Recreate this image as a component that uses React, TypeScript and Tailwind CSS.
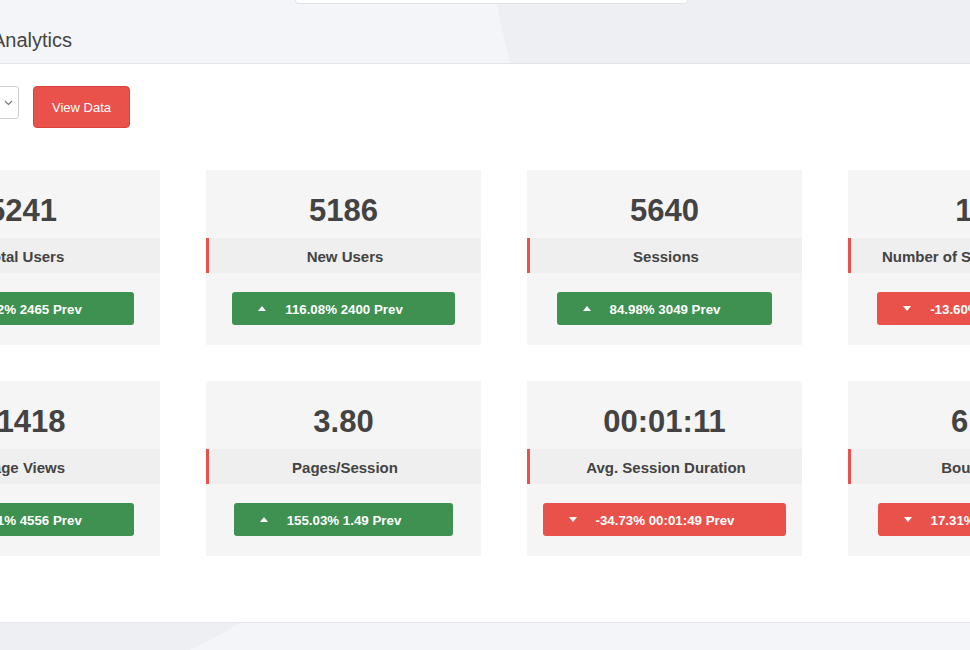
import React from 'react';

type Stat = {
  value: string;
  label: string;
  change: string;
  up: boolean;
};

const rows: Stat[][] = [
  [
    { value: '5241', label: 'Total Users', change: '112.62% 2465 Prev', up: true },
    { value: '5186', label: 'New Users', change: '116.08% 2400 Prev', up: true },
    { value: '5640', label: 'Sessions', change: '84.98% 3049 Prev', up: true },
    { value: '1.08', label: 'Number of Sessions per User', change: '-13.60% 1.25 Prev', up: false },
  ],
  [
    { value: '21418', label: 'Page Views', change: '370.11% 4556 Prev', up: true },
    { value: '3.80', label: 'Pages/Session', change: '155.03% 1.49 Prev', up: true },
    { value: '00:01:11', label: 'Avg. Session Duration', change: '-34.73% 00:01:49 Prev', up: false },
    { value: '6140', label: 'Bounce Rate', change: '17.31% 5234 Prev', up: false },
  ],
];

function Caret({ up }: { up: boolean }) {
  return (
    <svg width="8" height="5" viewBox="0 0 8 5" className="shrink-0">
      {up ? <polygon points="0,5 8,5 4,0" fill="#fff" /> : <polygon points="0,0 8,0 4,5" fill="#fff" />}
    </svg>
  );
}

function StatCard({ stat }: { stat: Stat }) {
  return (
    <div className="w-[275px] shrink-0 bg-[#f5f5f5] text-[#434343]">
      <div className="pt-[22px] pb-[9px] text-center text-[31px] leading-[37px] font-bold">{stat.value}</div>
      <div className="h-[35px] pt-[3px] flex items-center justify-center bg-[#efefef] border-l-[3px] border-[#e9524a] text-[15px] font-bold whitespace-nowrap">
        {stat.label}
      </div>
      <div className="pt-[19px] pb-[20px] flex justify-center">
        <div
          className={`h-[33px] inline-flex items-center gap-[19px] pl-[26px] pr-[52px] rounded-[3px] text-white text-[13.3px] font-bold whitespace-nowrap ${
            stat.up ? 'bg-[#3e9150]' : 'bg-[#e9524a]'
          }`}
        >
          <Caret up={stat.up} />
          <span className="pt-[2px]">{stat.change}</span>
        </div>
      </div>
    </div>
  );
}

export default function App() {
  return (
    <div className="w-[970px] h-[650px] overflow-hidden flex flex-col bg-[#f4f5f9] font-['Liberation_Sans',Arial,sans-serif]">
      {/* page header */}
      <div className="h-[64px] shrink-0 border-b border-[#e3e4e8] bg-[radial-gradient(circle_611px_at_1100px_-99px,#eeeff3_611px,#f4f5f9_612px)]">
        <div className="ml-[295px] w-[393px] h-[4px] bg-white border border-t-0 border-[#e2e3e7] rounded-b-[4px]" />
        <h1 className="-ml-[8px] mt-[22px] text-[20px] leading-[28px] text-[#444] font-normal">Analytics</h1>
      </div>

      {/* content */}
      <div className="h-[558px] shrink-0 bg-white pt-[22px]">
        <div className="flex items-start gap-[14px] -ml-[131px]">
          <div className="w-[150px] h-[33px] flex items-center justify-end pr-[5px] bg-white border border-[#cfcfcf] rounded-[3px]">
            <svg width="9" height="6" viewBox="0 0 9 6" fill="none">
              <path d="M1 1l3.5 3.5L8 1" stroke="#777" strokeWidth="1.1" />
            </svg>
          </div>
          <button className="w-[97px] h-[42px] pt-[2px] bg-[#e9524a] border border-[#d6443d] rounded-[4px] text-white text-[13px]">
            View Data
          </button>
        </div>

        <div className="mt-[42px] flex flex-col gap-[36px]">
          {rows.map((row, i) => (
            <div key={i} className="flex gap-[46px] -ml-[115px]">
              {row.map((s) => (
                <StatCard key={s.label} stat={s} />
              ))}
            </div>
          ))}
        </div>
      </div>

      {/* footer strip */}
      <div className="flex-1 border-t border-[#e3e4e8] bg-[radial-gradient(circle_453px_at_0px_-385px,#eeeff3_453px,#f4f5f9_454px)]" />
    </div>
  );
}
